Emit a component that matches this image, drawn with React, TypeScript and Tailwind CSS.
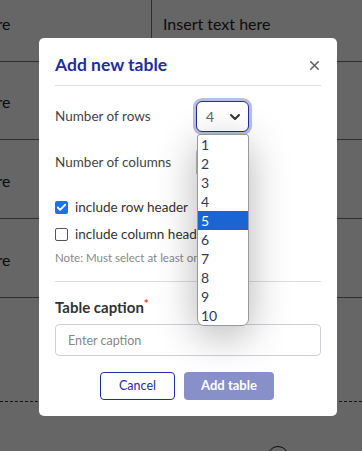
import { ChevronDown, X, Check } from 'lucide-react';

const font = { fontFamily: 'Lato, "Noto Sans", sans-serif' };

const rowHeights = ['h-[62px]', 'h-[78px]', 'h-[79px]', 'h-[79px]'];
const options = [1, 2, 3, 4, 5, 6, 7, 8, 9, 10];

function BackgroundTable() {
  return (
    <div className="absolute inset-0 bg-white overflow-hidden">
      <div className="flex flex-col">
        {rowHeights.map((h, i) => (
          <div key={i} className={`flex ${h} border-b border-[#777]`}>
            <div className="w-[260px] ml-[-108px] shrink-0 border-r border-[#777] flex items-end pl-[11px] pb-[25px] text-[16px] text-[#222]">
              Insert text here
            </div>
            <div className="flex-1 flex items-end pl-[11px] pb-[25px] text-[16px] text-[#222]">
              Insert text here
            </div>
          </div>
        ))}
        <div className="h-[104px] border-b border-dashed border-[#333]" />
        <div className="flex pl-[267px] pt-[44px]">
          <div className="w-[22px] h-[22px] rounded-full border border-[#222]" />
        </div>
      </div>
      <div className="absolute inset-0 bg-black/60" />
    </div>
  );
}

function RowsDropdown() {
  return (
    <div className="absolute left-[1px] top-[33px] w-[52px] bg-white border border-[#999] rounded-b-[7px] rounded-t-[3px] shadow-[0_10px_40px_rgba(0,0,0,0.3)] z-20 overflow-hidden">
      {options.map((n) => (
        <div
          key={n}
          className={`h-[19px] pl-[3px] flex items-center text-[14px] ${n === 5 ? 'bg-[#1a64d4] text-white' : 'text-[#2b3a5c]'}`}
        >
          {n}
        </div>
      ))}
    </div>
  );
}

function SelectBox({ value, open }: { value: string; open?: boolean }) {
  return (
    <div className="relative">
      <div
        className={`w-[53px] h-[31px] rounded-[6px] bg-white flex items-center justify-between pl-[9px] pr-[5px] text-[14px] text-[#666] ${open ? 'border-[1.5px] border-[#1f2d9e] ring-[3px] ring-[#b9bde9]' : 'border border-[#bbb]'}`}
      >
        <span>{value}</span>
        <ChevronDown size={16} strokeWidth={3} className="text-[#333]" />
      </div>
      {open && <RowsDropdown />}
    </div>
  );
}

export default function App() {
  return (
    <div className="relative w-[362px] h-[451px] overflow-hidden" style={font}>
      <BackgroundTable />

      <div className="absolute left-[39px] top-[38px] w-[298px] bg-white rounded-[5px] px-4 pt-[14px] pb-4 flex flex-col">
        {/* header */}
        <div className="flex items-center justify-between pb-[7px] border-b border-[#ddd]">
          <h2 className="text-[17.5px] font-bold text-[#1f2d9e] leading-[26px]">Add new table</h2>
          <X size={15} strokeWidth={2.5} className="text-[#666] mr-[-1px]" />
        </div>

        <div className="flex flex-col mt-[15px] gap-[15px]">
          <div className="flex items-center">
            <span className="w-[141px] text-[13.5px] text-[#444]">Number of rows</span>
            <SelectBox value="4" open />
          </div>
          <div className="flex items-center">
            <span className="w-[141px] text-[13.5px] text-[#444]">Number of columns</span>
            <SelectBox value="4" />
          </div>
        </div>

        <div className="flex flex-col mt-[19px] gap-[7px]">
          <label className="flex items-center gap-[7px] h-[20px] text-[13.5px] text-[#333]">
            <span className="w-[13px] h-[13px] rounded-[2px] bg-[#1a73e8] flex items-center justify-center">
              <Check size={11} strokeWidth={4} className="text-white" />
            </span>
            include row header
          </label>
          <label className="flex items-center gap-[7px] h-[20px] text-[13.5px] text-[#333]">
            <span className="w-[13px] h-[13px] rounded-[2px] border border-[#555] bg-white" />
            include column header
          </label>
        </div>
        <p className="mt-[5px] h-[17px] leading-[17px] text-[11.5px] text-[#888] whitespace-nowrap">
          Note: Must select at least one header
        </p>

        <div className="mt-[15px] border-t border-[#ddd]" />

        <div className="mt-[14px] h-[22px] leading-[22px] text-[15px] font-bold text-[#333]">
          Table caption<span className="text-[#e33] align-top text-[12px] leading-[16px]">*</span>
        </div>
        <input
          placeholder="Enter caption"
          className="mt-[6px] h-[32px] shrink-0 w-full rounded-[4px] border border-[#ccd0d8] px-[12px] text-[12.5px] placeholder:text-[#888] outline-none"
        />

        <div className="mt-[16px] flex justify-center gap-[9px] pr-[2px]">
          <button className="w-[75px] h-[28px] rounded-[4px] border-[1.5px] border-[#1f2d9e] text-[#1f2d9e] text-[12.5px] bg-white">
            Cancel
          </button>
          <button className="w-[90px] h-[28px] rounded-[4px] bg-[#8890c9] text-white text-[13px] font-bold">
            Add table
          </button>
        </div>
      </div>
    </div>
  );
}
